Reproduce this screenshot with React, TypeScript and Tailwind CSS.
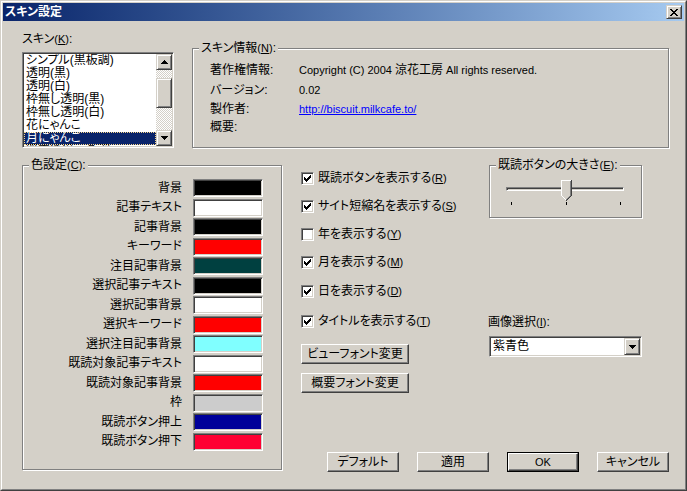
import React from 'react';

// classic win32 bevels
const raised = 'border border-t-white border-l-white border-r-[#404040] border-b-[#404040] shadow-[inset_-1px_-1px_0_#808080]';
const raisedSmall = 'border border-t-[#d4d0c8] border-l-[#d4d0c8] border-r-[#404040] border-b-[#404040] shadow-[inset_1px_1px_0_#fff,inset_-1px_-1px_0_#808080]';
const sunken = 'border border-t-[#808080] border-l-[#808080] border-r-white border-b-white shadow-[inset_1px_1px_0_#404040,inset_-1px_-1px_0_#d4d0c8]';
const etched = 'border border-[#808080] shadow-[inset_1px_1px_0_#fff,1px_1px_0_#fff]';

const skins = ['シンプル(黒板調)', '透明(黒)', '透明(白)', '枠無し透明(黒)', '枠無し透明(白)', '花にゃんこ', '月にゃんこ', '既定透過二色調'];

const colors = [
    { label: '背景', color: '#000000' },
    { label: '記事テキスト', color: '#ffffff' },
    { label: '記事背景', color: '#000000' },
    { label: 'キーワード', color: '#ff0000' },
    { label: '注目記事背景', color: '#004040' },
    { label: '選択記事テキスト', color: '#000000' },
    { label: '選択記事背景', color: '#ffffff' },
    { label: '選択キーワード', color: '#ff0000' },
    { label: '選択注目記事背景', color: '#80ffff' },
    { label: '既読対象記事テキスト', color: '#ffffff' },
    { label: '既読対象記事背景', color: '#ff0000' },
    { label: '枠', color: '#cccccc' },
    { label: '既読ボタン押上', color: '#000099' },
    { label: '既読ボタン押下', color: '#ff0033' },
];

const checks = [
    { text: '既読ボタンを表示する', key: 'R', on: true, h: 'h-[27px]' },
    { text: 'サイト短縮名を表示する', key: 'S', on: true, h: 'h-[28px]' },
    { text: '年を表示する', key: 'Y', on: false, h: 'h-[28px]' },
    { text: '月を表示する', key: 'M', on: true, h: 'h-[29px]' },
    { text: '日を表示する', key: 'D', on: true, h: 'h-[29px]' },
    { text: 'タイトルを表示する', key: 'T', on: true, h: 'h-[30px]' },
];

function Key({ k }: { k: string }) {
    return (
        <span className="text-[11px]">
            (<u>{k}</u>)
        </span>
    );
}

function CheckMark() {
    const ys = [2, 3, 4, 3, 2, 1, 0];
    return (
        <svg width="7" height="7" viewBox="0 0 7 7" shapeRendering="crispEdges">
            {ys.map((y, i) => (
                <rect key={i} x={i} y={y} width="1" height="3" fill="#000" />
            ))}
        </svg>
    );
}

function Arrow({ down }: { down?: boolean }) {
    const rows = [1, 3, 5, 7];
    const list = down ? [...rows].reverse() : rows;
    return (
        <svg width="7" height="4" viewBox="0 0 7 4" shapeRendering="crispEdges">
            {list.map((w, i) => (
                <rect key={i} x={(7 - w) / 2} y={i} width={w} height="1" fill="#000" />
            ))}
        </svg>
    );
}

function CloseGlyph() {
    const rows = [
        [0, 1, 6, 7],
        [1, 2, 5, 6],
        [2, 3, 4, 5],
        [3, 4],
        [2, 3, 4, 5],
        [1, 2, 5, 6],
        [0, 1, 6, 7],
    ];
    return (
        <svg width="8" height="7" viewBox="0 0 8 7" shapeRendering="crispEdges">
            {rows.map((r, y) => r.map((x) => <rect key={`${x}-${y}`} x={x} y={y} width="1" height="1" fill="#000" />))}
        </svg>
    );
}

function Thumb() {
    return (
        <svg width="11" height="21" viewBox="0 0 11 21" shapeRendering="crispEdges">
            <path d="M0 0H11V16L5.5 21L0 16Z" fill="#d4d0c8" />
            <rect x="0" y="0" width="10" height="1" fill="#fff" />
            <rect x="0" y="0" width="1" height="16" fill="#fff" />
            {[1, 2, 3, 4].map((i) => (
                <rect key={`w${i}`} x={i} y={15 + i} width="1" height="1" fill="#fff" />
            ))}
            <rect x="10" y="0" width="1" height="16" fill="#404040" />
            <rect x="9" y="1" width="1" height="15" fill="#808080" />
            {[0, 1, 2, 3, 4].map((i) => (
                <rect key={`d${i}`} x={9 - i} y={16 + i} width="1" height="1" fill="#404040" />
            ))}
            {[0, 1, 2, 3].map((i) => (
                <rect key={`g${i}`} x={8 - i} y={16 + i} width="1" height="1" fill="#808080" />
            ))}
        </svg>
    );
}

function Group({ legend, className, children }: { legend: React.ReactNode; className: string; children?: React.ReactNode }) {
    return (
        <div className={`relative ${etched} ${className}`}>
            <span className="absolute -top-[7px] left-[6px] bg-[#d4d0c8] px-[2px] leading-[13px] whitespace-nowrap">{legend}</span>
            {children}
        </div>
    );
}

function Button({ children, def }: { children: React.ReactNode; def?: boolean }) {
    if (def) {
        return (
            <div className="w-[72px] h-[20px] border border-black">
                <div className={`w-full h-full ${raised} flex items-center justify-center leading-[13px] whitespace-nowrap`}>{children}</div>
            </div>
        );
    }
    return <div className={`w-[72px] h-[20px] ${raised} flex items-center justify-center leading-[13px] whitespace-nowrap`}>{children}</div>;
}

export default function App() {
    return (
        <div className="w-[687px] h-[491px] bg-[#d4d0c8] border border-t-[#d4d0c8] border-l-[#d4d0c8] border-r-[#404040] border-b-[#404040] font-['Liberation_Sans','Noto_Sans_CJK_JP',sans-serif] [font-feature-settings:'palt'] text-[12px] text-black select-none">
            <div className="w-full h-full border border-t-white border-l-white border-r-[#808080] border-b-[#808080] p-[1px] flex flex-col">
                {/* title bar */}
                <div className="h-[18px] flex items-center bg-gradient-to-r from-[#0a246a] to-[#a6caf0] pl-[2px] pr-[2px]">
                    <span className="flex-1 text-white font-bold leading-[13px]">スキン設定</span>
                    <div className={`w-[16px] h-[14px] ${raisedSmall} bg-[#d4d0c8] flex items-center justify-center`}>
                        <CloseGlyph />
                    </div>
                </div>

                {/* body */}
                <div className="flex-1 flex flex-col pl-[19px]">
                    <div className="flex pt-[12px]">
                        <div className="w-[152px] flex flex-col">
                            <div className="h-[13px] leading-[13px] mb-[6px]">
                                スキン<Key k="K" />:
                            </div>
                            <div className={`h-[96px] bg-white ${sunken} p-[1px] flex`}>
                                <div className="flex-1 overflow-hidden">
                                    {skins.map((s, i) => (
                                        <div
                                            key={s}
                                            className={`h-[13px] leading-[13px] pl-[2px] whitespace-nowrap ${i === 6 ? 'bg-[#0a246a] text-white outline-1 outline-dotted outline-[#f5d58a] -outline-offset-1' : ''}`}
                                        >
                                            {s}
                                        </div>
                                    ))}
                                </div>
                                <div className="w-[16px] flex flex-col">
                                    <div className={`h-[16px] ${raisedSmall} bg-[#d4d0c8] flex items-center justify-center`}>
                                        <Arrow />
                                    </div>
                                    <div className="flex-1 bg-[repeating-conic-gradient(#fff_0_25%,#d4d0c8_0_50%)] bg-[length:2px_2px]">
                                        <div className={`mt-[8px] h-[30px] ${raisedSmall} bg-[#d4d0c8]`} />
                                    </div>
                                    <div className={`h-[16px] ${raisedSmall} bg-[#d4d0c8] flex items-center justify-center`}>
                                        <Arrow down />
                                    </div>
                                </div>
                            </div>
                        </div>

                        <Group
                            className="ml-[18px] mt-[15px] w-[477px] h-[100px] pt-[12px] pl-[17px]"
                            legend={
                                <>
                                    スキン情報<Key k="N" />:
                                </>
                            }
                        >
                            <div className="h-[19px] flex items-center">
                                <span className="w-[89px] leading-[13px]">著作権情報:</span>
                                <span className="leading-[13px]">
                                    <span className="text-[11px]">Copyright (C) 2004 </span>涼花工房<span className="text-[11px]"> All rights reserved.</span>
                                </span>
                            </div>
                            <div className="h-[20px] flex items-center">
                                <span className="w-[89px] leading-[13px]">バージョン:</span>
                                <span className="text-[11px] leading-[13px]">0.02</span>
                            </div>
                            <div className="h-[18px] flex items-center">
                                <span className="w-[89px] leading-[13px]">製作者:</span>
                                <span className="text-[11px] leading-[13px] text-[#0000ff] underline">http://biscuit.milkcafe.to/</span>
                            </div>
                            <div className="h-[19px] flex items-center">
                                <span className="w-[89px] leading-[13px]">概要:</span>
                            </div>
                        </Group>
                    </div>

                    <div className="flex mt-[17px]">
                        <Group
                            className="w-[260px] h-[305px] pt-[12px]"
                            legend={
                                <>
                                    色設定<Key k="C" />:
                                </>
                            }
                        >
                            {colors.map((c, i) => (
                                <div key={c.label} className={`flex items-center ${i % 2 === 0 ? 'h-[20px]' : 'h-[19px]'}`}>
                                    <span className="w-[159px] text-right leading-[13px] whitespace-nowrap">{c.label}</span>
                                    <div className={`ml-[11px] w-[70px] h-[18px] ${sunken}`} style={{ backgroundColor: c.color }} />
                                </div>
                            ))}
                        </Group>

                        <div className="flex-1 flex flex-col">
                            <div className="flex h-[228px]">
                                <div className="ml-[19px] w-[188px] flex flex-col">
                                    {checks.map((c) => (
                                        <div key={c.key} className={`${c.h} flex items-center gap-[4px]`}>
                                            <div className={`w-[13px] h-[13px] bg-white ${sunken} flex items-center justify-center`}>
                                                {c.on && <CheckMark />}
                                            </div>
                                            <span className="leading-[13px] whitespace-nowrap">
                                                {c.text}
                                                <Key k={c.key} />
                                            </span>
                                        </div>
                                    ))}
                                    <div className={`mt-[8px] w-[108px] h-[20px] ${raised} flex items-center justify-center leading-[13px] whitespace-nowrap`}>ビューフォント変更</div>
                                    <div className={`mt-[9px] w-[108px] h-[20px] ${raised} flex items-center justify-center leading-[13px] whitespace-nowrap`}>概要フォント変更</div>
                                </div>

                                <div className="w-[153px] flex flex-col">
                                    <Group
                                        className="h-[53px] pt-[21px]"
                                        legend={
                                            <>
                                                既読ボタンの大きさ<Key k="E" />:
                                            </>
                                        }
                                    >
                                        <div className={`relative ml-[16px] w-[118px] h-[4px] ${sunken}`}>
                                            <div className="absolute left-[54px] -top-[8px] leading-none">
                                                <Thumb />
                                            </div>
                                        </div>
                                        <div className="ml-[21px] w-[110px] mt-[11px] flex justify-between">
                                            <div className="w-[1px] h-[3px] bg-black" />
                                            <div className="w-[1px] h-[3px] bg-black" />
                                            <div className="w-[1px] h-[3px] bg-black" />
                                        </div>
                                    </Group>
                                    <div className="mt-[98px] h-[13px] leading-[13px] -ml-[1px]">
                                        画像選択<Key k="I" />:
                                    </div>
                                    <div className={`mt-[7px] h-[21px] bg-white ${sunken} flex items-center p-[1px]`}>
                                        <span className="flex-1 pl-[2px] leading-[13px]">紫青色</span>
                                        <div className={`w-[16px] h-[17px] ${raisedSmall} bg-[#d4d0c8] flex items-center justify-center`}>
                                            <Arrow down />
                                        </div>
                                    </div>
                                </div>
                            </div>

                            <div className="mt-[59px] flex justify-end gap-[18px] pr-[15px]">
                                <Button>デフォルト</Button>
                                <Button>適用</Button>
                                <Button def>
                                    <span className="text-[11px]">OK</span>
                                </Button>
                                <Button>キャンセル</Button>
                            </div>
                        </div>
                    </div>
                </div>
            </div>
        </div>
    );
}
